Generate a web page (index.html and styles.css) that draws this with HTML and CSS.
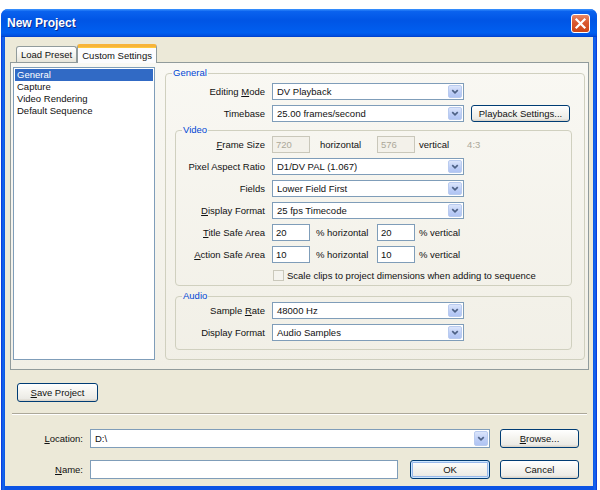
FILE: index.html
```html
<!DOCTYPE html>
<html>
<head>
<meta charset="utf-8">
<title>New Project</title>
<link rel="stylesheet" href="styles.css">
</head>
<body>
<div class="window">
  <div class="titlebar">
    <span class="title">New Project</span>
    <span class="close"><svg width="17" height="17" viewBox="0 0 17 17"><path d="M4.5 4.5L12.5 12.5M12.5 4.5L4.5 12.5" stroke="#fff" stroke-width="2.2" stroke-linecap="square"/></svg></span>
  </div>
  <div class="client">
    <div class="tabs">
      <div class="tab">Load Preset</div>
      <div class="tab active">Custom Settings</div>
    </div>
    <div class="panel">
      <ul class="list">
        <li class="sel">General</li>
        <li>Capture</li>
        <li>Video Rendering</li>
        <li>Default Sequence</li>
      </ul>
      <fieldset class="group general">
        <legend>General</legend>
        <div class="row">
          <span class="lbl">Editing <u>M</u>ode</span>
          <div class="combo"><span class="val">DV Playback</span><span class="arrow"><svg width="13" height="13" viewBox="0 0 13 13"><path d="M3.5 5L6.5 8L9.5 5" stroke="#4d6185" stroke-width="1.8" fill="none"/></svg></span></div>
        </div>
        <div class="row">
          <span class="lbl">Timebase</span>
          <div class="combo"><span class="val">25.00 frames/second</span><span class="arrow"><svg width="13" height="13" viewBox="0 0 13 13"><path d="M3.5 5L6.5 8L9.5 5" stroke="#4d6185" stroke-width="1.8" fill="none"/></svg></span></div>
          <span class="btn playback">Playback Settings...</span>
        </div>
        <fieldset class="group inner video">
          <legend>Video</legend>
          <div class="row">
            <span class="lbl"><u>F</u>rame Size</span>
            <div class="pair">
              <span class="field num disabled">720</span>
              <span class="mid frame">horizontal</span>
              <span class="field num disabled">576</span>
              <span class="after">vertical</span>
              <span class="ratio">4:3</span>
            </div>
          </div>
          <div class="row">
            <span class="lbl">Pixel Aspect Ratio</span>
            <div class="combo"><span class="val">D1/DV PAL (1.067)</span><span class="arrow"><svg width="13" height="13" viewBox="0 0 13 13"><path d="M3.5 5L6.5 8L9.5 5" stroke="#4d6185" stroke-width="1.8" fill="none"/></svg></span></div>
          </div>
          <div class="row">
            <span class="lbl">Fields</span>
            <div class="combo"><span class="val">Lower Field First</span><span class="arrow"><svg width="13" height="13" viewBox="0 0 13 13"><path d="M3.5 5L6.5 8L9.5 5" stroke="#4d6185" stroke-width="1.8" fill="none"/></svg></span></div>
          </div>
          <div class="row">
            <span class="lbl"><u>D</u>isplay Format</span>
            <div class="combo"><span class="val">25 fps Timecode</span><span class="arrow"><svg width="13" height="13" viewBox="0 0 13 13"><path d="M3.5 5L6.5 8L9.5 5" stroke="#4d6185" stroke-width="1.8" fill="none"/></svg></span></div>
          </div>
          <div class="row">
            <span class="lbl"><u>T</u>itle Safe Area</span>
            <div class="pair">
              <span class="field num">20</span>
              <span class="mid">% horizontal</span>
              <span class="field num">20</span>
              <span class="after">% vertical</span>
            </div>
          </div>
          <div class="row">
            <span class="lbl"><u>A</u>ction Safe Area</span>
            <div class="pair">
              <span class="field num">10</span>
              <span class="mid">% horizontal</span>
              <span class="field num">10</span>
              <span class="after">% vertical</span>
            </div>
          </div>
          <div class="row check">
            <span class="lbl"></span>
            <span class="box"></span>
            <span class="checktext">Scale clips to project dimensions when adding to sequence</span>
          </div>
        </fieldset>
        <fieldset class="group inner audio">
          <legend>Audio</legend>
          <div class="row">
            <span class="lbl">Sample <u>R</u>ate</span>
            <div class="combo"><span class="val">48000 Hz</span><span class="arrow"><svg width="13" height="13" viewBox="0 0 13 13"><path d="M3.5 5L6.5 8L9.5 5" stroke="#4d6185" stroke-width="1.8" fill="none"/></svg></span></div>
          </div>
          <div class="row">
            <span class="lbl">Display Format</span>
            <div class="combo"><span class="val">Audio Samples</span><span class="arrow"><svg width="13" height="13" viewBox="0 0 13 13"><path d="M3.5 5L6.5 8L9.5 5" stroke="#4d6185" stroke-width="1.8" fill="none"/></svg></span></div>
          </div>
        </fieldset>
      </fieldset>
    </div>
    <div class="saverow"><span class="btn save"><u>S</u>ave Project</span></div>
    <div class="sep"></div>
    <div class="frow first">
      <span class="flbl"><u>L</u>ocation:</span>
      <div class="combo loc"><span class="val">D:\</span><span class="arrow"><svg width="13" height="13" viewBox="0 0 13 13"><path d="M3.5 5L6.5 8L9.5 5" stroke="#4d6185" stroke-width="1.8" fill="none"/></svg></span></div>
      <span class="btn browse"><u>B</u>rowse...</span>
    </div>
    <div class="frow">
      <span class="flbl"><u>N</u>ame:</span>
      <span class="field name"></span>
      <span class="btn ok default">OK</span>
      <span class="btn cancel">Cancel</span>
    </div>
  </div>
</div>
</body>
</html>
```

FILE: styles.css
```css
* { box-sizing: border-box; }
body {
  margin: 0;
  background: #fff;
  font-family: "Liberation Sans", Arial, sans-serif;
  font-size: 9.5px;
  color: #111;
}
u { text-decoration: underline; }
.window {
  margin: 9px 0 0 1px;
  width: 596px;
  height: 481px;
  display: flex;
  flex-direction: column;
  border-radius: 7px 7px 0 0;
  overflow: hidden;
  background: linear-gradient(to right, #0831d9, #166aee 2px, #0b53e4 4px, #0b53e4 592px, #166aee 594px, #0831d9);
}
.titlebar {
  height: 28px;
  flex: none;
  display: flex;
  align-items: center;
  justify-content: space-between;
  padding: 0 7px 0 6px;
  background: linear-gradient(to bottom, #3d95ff, #0a62ee 9%, #0055e5 40%, #005ff0 85%, #0050e0 95%, #003dc8);
}
.title {
  color: #fff;
  font-weight: bold;
  font-size: 12px;
  text-shadow: 1px 1px #0a2a90;
}
.close {
  width: 19px;
  height: 19px;
  border: 1px solid #fff;
  border-radius: 3px;
  background: linear-gradient(to bottom, #e98866, #d9582f 45%, #cc4517 100%);
  display: flex;
  align-items: center;
  justify-content: center;
}
.client {
  flex: 1;
  margin: 0 4px 4px;
  background: #ece9d8;
  display: flex;
  flex-direction: column;
  padding: 7px 4px 0 5px;
}
.tabs {
  height: 18px;
  display: flex;
  align-items: flex-end;
  padding-left: 6px;
  position: relative;
  z-index: 1;
}
.tab {
  height: 16px;
  padding: 0 4px;
  display: flex;
  align-items: center;
  border: 1px solid #919b9c;
  border-bottom: none;
  border-radius: 3px 3px 0 0;
  background: linear-gradient(#fff, #f3f2ec 60%, #e6e4d9);
}
.tab.active {
  height: 19px;
  margin-bottom: -1px;
  padding: 0 4px;
  background: #fcfcfe;
  border-top: 3px solid #f7b43a;
  box-shadow: inset 0 1px #ffc83c;
}
.panel {
  height: 308px;
  display: flex;
  gap: 10px;
  padding: 4px 3px 9px 2px;
  border: 1px solid #919b9c;
  background: linear-gradient(#f9f8f3, #f1efe6);
}
.list {
  width: 142px;
  margin: 0;
  padding: 1px;
  list-style: none;
  background: #fff;
  border: 1px solid #7f9db9;
}
.list li {
  height: 12px;
  line-height: 12px;
  padding-left: 2px;
  white-space: nowrap;
}
.list li.sel {
  background: #316ac5;
  color: #fff;
}
.group {
  margin: 0;
  border: 1px solid #d0d0bf;
  border-radius: 4px;
  min-width: 0;
}
.group legend {
  padding: 0 1px;
  line-height: 12px;
  color: #0046d5;
}
.general {
  flex: 1;
  padding: 4px 6px 9px 6px;
}
.inner {
  margin: 2px 6px 0 3px;
  padding: 0 6px 2px 6px;
}
.audio {
  margin-top: 4px;
  padding-bottom: 8px;
}
.row {
  height: 17px;
  display: flex;
  align-items: center;
  margin-top: 5px;
  white-space: nowrap;
}
.general > .row:first-of-type,
.inner > .row:first-of-type { margin-top: 0; }
.lbl {
  width: 93px;
  flex: none;
  text-align: right;
  margin-right: 7px;
}
.inner .lbl { width: 83px; }
.combo {
  width: 192px;
  height: 17px;
  flex: none;
  display: flex;
  align-items: center;
  justify-content: space-between;
  background: #fff;
  border: 1px solid #7f9db9;
  padding: 1px;
}
.combo .val { padding-left: 3px; }
.arrow {
  width: 14px;
  height: 13px;
  display: flex;
  align-items: center;
  justify-content: center;
  border: 1px solid #b9cbef;
  border-radius: 2px;
  background: linear-gradient(#dbe5fb, #bccdf6 60%, #b0c4f3);
}
.btn {
  display: inline-flex;
  align-items: center;
  justify-content: center;
  height: 17px;
  border: 1px solid #003c74;
  border-radius: 3px;
  background: linear-gradient(#ffffff, #f4f3ee 50%, #ecebe6 85%, #d6d0c5);
  white-space: nowrap;
}
.playback {
  width: 99px;
  margin-left: 7px;
}
.pair {
  display: flex;
  align-items: center;
}
.field {
  height: 17px;
  background: #fff;
  border: 1px solid #7f9db9;
  display: flex;
  align-items: center;
  padding-left: 3px;
}
.num { width: 38px; }
.field.disabled {
  background: #f3f1ea;
  border-color: #c9c7ba;
  color: #aca899;
}
.mid { width: 67px; padding-left: 6px; }
.mid.frame { padding-left: 10px; }
.after { padding-left: 4px; }
.ratio { margin-left: 18px; color: #aca899; }
.row.check { height: 15px; }
.box {
  width: 11px;
  height: 11px;
  margin-left: 1px;
  border: 1px solid #cac8bb;
  background: #f4f3ee;
}
.checktext { margin-left: 3px; }
.saverow {
  margin-top: 13px;
  padding-left: 7px;
}
.save {
  width: 81px;
  height: 19px;
}
.sep {
  margin: 11px 2px 0 2px;
  border-top: 1px solid #aca899;
  border-bottom: 1px solid #fff;
}
.frow {
  height: 19px;
  display: flex;
  align-items: center;
  margin-top: 12px;
}
.frow.first { margin-top: 14px; }
.flbl {
  width: 73px;
  text-align: right;
  margin-right: 7px;
}
.combo.loc {
  width: 400px;
  height: 19px;
}
.combo.loc .arrow { height: 15px; }
.frow .btn { height: 19px; }
.browse { width: 79px; margin-left: 10px; }
.name { width: 308px; height: 19px; }
.ok { width: 80px; margin-left: 12px; }
.cancel { width: 79px; margin-left: 10px; }
.btn.default {
  box-shadow: inset 0 0 0 1px #cee7ff, inset 0 0 0 2px #98b8ea;
}
```
